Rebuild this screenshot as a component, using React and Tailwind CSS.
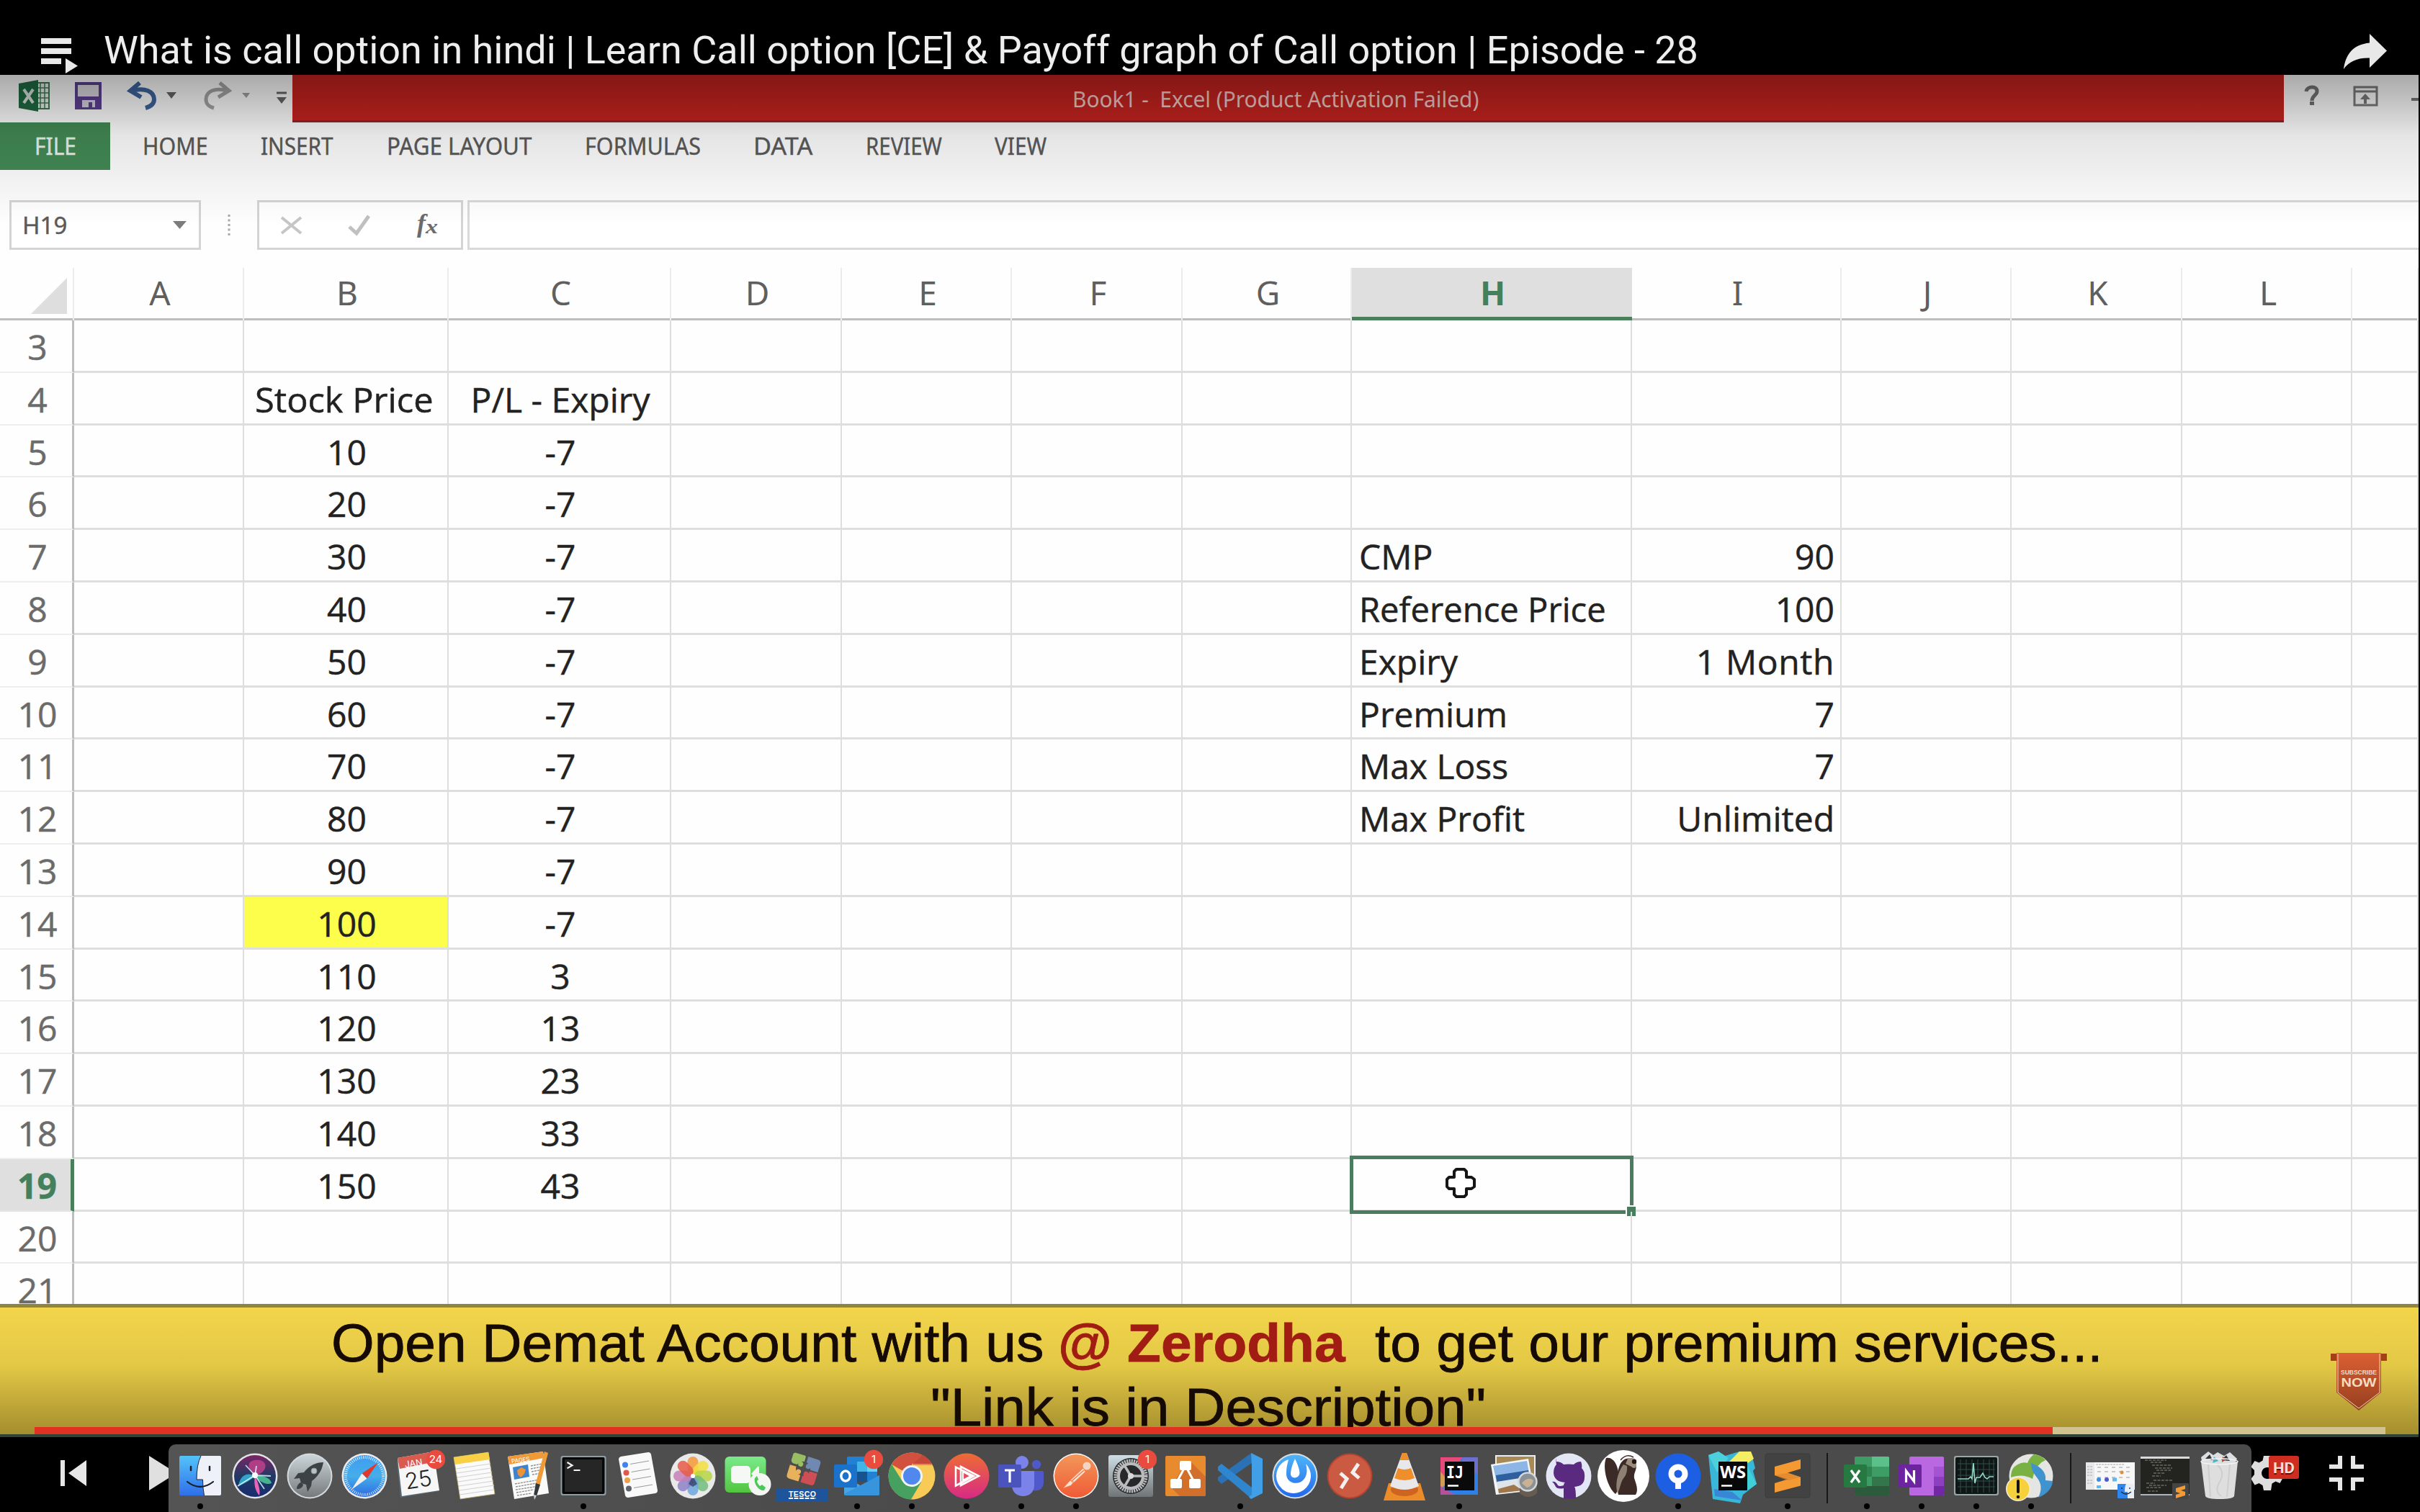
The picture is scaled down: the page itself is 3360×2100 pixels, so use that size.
import React, { useLayoutEffect, useRef, useState } from "react";

/* Text squeezed or stretched horizontally to an exact width */
function Fit({ w, className = "", children }) {
  const ref = useRef(null);
  const [s, setS] = useState(1);
  useLayoutEffect(() => {
    setS(w / ref.current.offsetWidth);
  }, [w]);
  return (
    <span className="block shrink-0 whitespace-pre" style={{ width: w }}>
      <span ref={ref} className={"inline-block origin-left " + className} style={{ transform: `scaleX(${s})` }}>
        {children}
      </span>
    </span>
  );
}

const LETTERS = ["A", "B", "C", "D", "E", "F", "G", "H", "I", "J", "K", "L", ""];
const GRID = "grid grid-cols-[103px_236px_284px_309px_237px_236px_237px_235px_389px_291px_236px_237px_236px_92px]";

const B = { 4: "Stock Price" };
const C = { 4: "P/L - Expiry" };
for (let r = 5; r <= 19; r++) {
  B[r] = String((r - 4) * 10);
  C[r] = r <= 14 ? "-7" : String((r - 15) * 10 + 3);
}
const H = { 7: "CMP", 8: "Reference Price", 9: "Expiry", 10: "Premium", 11: "Max Loss", 12: "Max Profit" };
const I = { 7: "90", 8: "100", 9: "1 Month", 10: "7", 11: "7", 12: "Unlimited" };
const ROWS = Array.from({ length: 19 }, (_, i) => i + 3);

function Cell({ r, c }) {
  const base = "h-[72.8px] border-r-2 border-b-[3px] border-[#dedede] pt-[4px] leading-[66px] whitespace-nowrap ";
  if (c === "B")
    return (
      <div className={base + "pl-[3px] text-center " + (r === 14 ? "bg-[#fdfd4c]" : "")}>
        {r === 4 ? (
          <div className="pl-[10px]">
            <Fit w={248}>{B[r]}</Fit>
          </div>
        ) : (
          B[r]
        )}
      </div>
    );
  if (c === "C") return <div className={base + "pl-[3px] text-center"}>{C[r]}</div>;
  if (c === "H")
    return (
      <div className={base + "relative pl-[10px]"}>
        {r === 8 ? <Fit w={343}>{H[r]}</Fit> : H[r]}
        {r === 19 && (
          <div className="absolute -left-[3px] -top-[5px] h-[81px] w-[394px] border-[5px] border-[#4a7c60]">
            <div className="absolute -bottom-[8px] -right-[8px] h-[15px] w-[14px] border-l-2 border-t-2 border-white bg-[#4a7c60]" />
            <svg className="absolute left-[128px] top-[12px] h-[42px] w-[42px]" viewBox="0 0 42 42">
              <path d="M15 2h11l3 3v8h7l4 3v10l-4 3h-7v8l-3 3H15l-3-3v-8H5l-3-3V16l3-3h7V5z" fill="#fff" stroke="#161616" strokeWidth="4" strokeLinejoin="round" />
            </svg>
          </div>
        )}
      </div>
    );
  if (c === "I")
    return (
      <div className={base + "pr-[8px] text-right"}>
        <span className={r === 9 ? "tracking-[0.6px]" : ""}>{I[r]}</span>
      </div>
    );
  return <div className={base} />;
}

function QuickAccess() {
  return (
    <svg className="h-[65px] w-[406px] shrink-0" viewBox="0 0 406 65">
      <rect x="50" y="11" width="18" height="36" fill="#e8efe9" stroke="#3c7a55" strokeWidth="2" />
      <path d="M56 11v36M62 11v36M50 18h18M50 25h18M50 32h18M50 39h18" stroke="#3c7a55" strokeWidth="1.5" />
      <path d="M26 12L53 7v44l-27-5z" fill="#1f6b43" />
      <path d="M33 20l13 19M46 20L33 39" stroke="#d5e3da" strokeWidth="4" />
      <path d="M106 12h33v34h-33z" fill="#dcdae0" stroke="#5d4192" strokeWidth="4" />
      <path d="M106 30h33v16h-33z" fill="#5d4192" />
      <path d="M114 35h18v10h-4v-7h-5v7h-9z" fill="#d8d4e2" />
      <path d="M194 11l-13 11 15 9M183 22c18-5 31 1 31 12 0 7-5 10-12 12" fill="none" stroke="#3e659f" strokeWidth="6" />
      <path d="M231 24h14l-7 9z" fill="#666" />
      <path d="M305 11l13 11-15 9M316 22c-18-5-30 1-30 12 0 7 4 10 11 12" fill="none" stroke="#a5a5a5" strokeWidth="5" />
      <path d="M336 25h11l-5 7z" fill="#a0a0a0" />
      <path d="M384 25h14" stroke="#666" strokeWidth="3" />
      <path d="M384 31h14l-7 9z" fill="#666" />
    </svg>
  );
}

const TABS = [
  ["HOME", 91, "ml-[45px]"],
  ["INSERT", 101, "ml-[73px]"],
  ["PAGE LAYOUT", 201, "ml-[74px]"],
  ["FORMULAS", 161, "ml-[74px]"],
  ["DATA", 82, "ml-[73px]"],
  ["REVIEW", 106, "ml-[74px]"],
  ["VIEW", 72, "ml-[73px]"],
];

function Badge({ cx, t }) {
  return (
    <g>
      <circle cx={cx} cy="21" r="13.2" fill="#e94b3f" />
      <text x={cx} y="26" fontSize="15" fill="#fff" textAnchor="middle" fontFamily="Inter, sans-serif">{t}</text>
    </g>
  );
}

const petals = ["#f39a3a", "#f3df3d", "#b7d548", "#72bd7e", "#6fa6dd", "#8d83c8", "#c67fb8", "#e75a48"];

const ICONS = {
  finder: (
    <>
      <rect x="9" y="16" width="58" height="55" rx="2" fill="url(#gFinder)" />
      <path d="M39 16h26q2 0 2 2v51q0 2-2 2H43.500q-2-10-2-22H33q0-22 6-33z" fill="#eef2f8" />
      <path d="M39 16q-6 12-6 33h8.500q0 12 2 22" fill="none" stroke="#223" strokeWidth="1" />
      <path d="M25 31v5M51 31v5" stroke="#17202c" strokeWidth="2.500" strokeLinecap="round" />
      <path d="M20 52q18 14 36 0" fill="none" stroke="#17202c" strokeWidth="2.200" strokeLinecap="round" />
    </>
  ),
  siri: (
    <>
      <circle cx="38" cy="44" r="31.500" fill="#e4e3e8" />
      <circle cx="38" cy="44" r="29" fill="url(#gSiri)" />
      <path d="M38 44C24 30 28 20 45 22 56 25 56 38 38 44z" fill="#c8418f" opacity=".8" />
      <path d="M38 44C22 36 16 50 15 58 24 54 32 50 38 44z" fill="#36b6d8" opacity=".85" />
      <path d="M38 44c12-2 22 4 23 10-8 3-17-2-23-10z" fill="#4fd39b" opacity=".8" />
      <path d="M38 44c4 8 8 20 6 27-6-6-8-18-6-27z" fill="#ee62b4" />
      <path d="M14 58L38 43l22 1M25 29l13 14 13 19M40 30l-2 14" stroke="#dffcff" strokeWidth="1.800" fill="none" opacity=".8" />
      <circle cx="38" cy="43" r="4" fill="#fff" />
    </>
  ),
  launchpad: (
    <>
      <circle cx="38" cy="44" r="31.500" fill="#d3dade" />
      <circle cx="38" cy="44" r="29.500" fill="url(#gGray)" />
      <path d="M57 25C45 25 36 31 30 39l-8 1-6 8 8-1 2 7 7 2 2 10 5-8 1-7c8-6 14-14 16-26z" fill="#3d4247" />
      <circle cx="44" cy="37" r="4" fill="#b9c1c5" stroke="#8a9297" />
      <path d="M26 53c-4 1-6 5-6 9 5 0 8-2 9-6z" fill="#3d4247" />
    </>
  ),
  safari: (
    <>
      <circle cx="38" cy="44" r="31.500" fill="#ececec" />
      <circle cx="38" cy="44" r="29" fill="url(#gSafari)" />
      <circle cx="38" cy="44" r="26" fill="none" stroke="#e7f5ff" strokeWidth="4" strokeDasharray=".9 1.820" />
      <path d="M57 25L41.500 47.500 34.500 40.500z" fill="#e2382c" />
      <path d="M20 63L34.500 40.500 41.500 47.500z" fill="#eef0f2" />
    </>
  ),
  calendar: (
    <>
      <path d="M7 24l5 50 54-9-3-10z" fill="#596775" />
      <path d="M8 19l50-9 8 54-52 8z" fill="#f6f6f6" />
      <path d="M8 19l50-9 3 14-50 10z" fill="#d95a4f" />
      <g transform="rotate(-9 36 44)">
        <text x="33" y="30" fontSize="12.500" fill="#fff" textAnchor="middle" fontFamily="Inter, sans-serif">JAN</text>
        <text x="36" y="60" fontSize="31" fill="#222" textAnchor="middle" fontFamily="Inter, sans-serif" fontWeight="300">25</text>
      </g>
      <Badge cx="61" t="24" />
    </>
  ),
  notes: (
    <>
      <path d="M10 18l48-7 9 58-48 7z" fill="#fafafa" stroke="#b5a468" strokeWidth=".8" />
      <path d="M10 18l48-7 2 10-48 7z" fill="#f9cf45" />
      <path d="M13 34l48-7M14 40l48-7M15 46l48-7M16 52l48-7M17 58l48-7M18 64l48-7M18 70l48-7" stroke="#cfd0d2" strokeWidth="1" />
    </>
  ),
  pages: (
    <>
      <path d="M9 17l49-7 8 58-48 8z" fill="#fafafa" />
      <path d="M9 17l49-7 1 9-48 9z" fill="#f09a37" />
      <g transform="rotate(-8 24 22)">
        <text x="14" y="25" fontSize="8" fill="#fff" fontFamily="Inter, sans-serif">PAGES</text>
      </g>
      <path d="M16 32l21-4 2 17-21 4z" fill="#3e83cf" />
      <path d="M22 36l6-4 6 3-2 6-5 5-4-4z" fill="#ee9333" />
      <path d="M41 30l16-3M41 34l16-3M42 38l16-3M43 42l14-2M19 55l34-6M20 59l34-6M20 63l33-5M21 67l24-4M22 71l20-3" stroke="#8c8c8c" strokeWidth="1.300" strokeDasharray="3 1" />
      <path d="M60 10l5 2-12 47-6-2z" fill="#ef9c37" />
      <path d="M48 54l6 2-5 16-4-1z" fill="#33383d" />
      <path d="M45 70l4 1-3 6z" fill="#cfd6d9" />
    </>
  ),
  terminal: (
    <>
      <rect x="6.500" y="16" width="63" height="55" rx="3" fill="#8b9da5" />
      <rect x="8.500" y="18" width="59" height="51" rx="2" fill="#060606" />
      <rect x="12" y="21" width="52" height="45" fill="#262626" />
      <path d="M15.500 25l7 4.200-7 4.200" stroke="#f3f3f3" strokeWidth="2.200" fill="none" />
      <path d="M24.500 36h9" stroke="#f3f3f3" strokeWidth="2" />
    </>
  ),
  reminders: (
    <>
      <path d="M14 17l38-6q3 0 4 3l9 50q0 3-3 4l-38 6q-3 0-4-3L11 21q0-3 3-4z" fill="#f9f9f9" />
      {[["#3f82f2", 20, 28.500], ["#e2574c", 21.500, 39.500], ["#e8a24a", 23, 50], ["#5d646b", 25, 61.500]].map(([f, x, y]) => (
        <g key={f}>
          <circle cx={x} cy={y} r="4" fill={f} />
          <path d={`M${x + 7} ${y - 1}l26-4.500`} stroke="#8d8d8d" strokeWidth=".9" />
        </g>
      ))}
    </>
  ),
  photos: (
    <>
      <circle cx="38" cy="44" r="31.500" fill="#e9e9ea" />
      {petals.map((f, i) => (
        <rect key={f} x="30.500" y="17" width="15" height="25" rx="7.500" fill={f} opacity=".85" transform={`rotate(${i * 45} 38 44)`} />
      ))}
      <path d="M38 44L32 55l6 4 6-4z" fill="#28345c" opacity=".7" />
      <circle cx="38" cy="44" r="3" fill="#fff" />
    </>
  ),
  facetime: (
    <>
      <rect x="6.500" y="17" width="57" height="50" rx="6" fill="url(#gGreen)" />
      <rect x="15" y="30" width="27" height="24" rx="5" fill="#f5f8f4" />
      <path d="M43 41l9-10q2-1 2 1v20z" fill="#f5f8f4" />
      <circle cx="55" cy="55.500" r="15.500" fill="#f4f6f4" />
      <path d="M48 47c-2 8 6 18 13 17l2-4-5-4-3 2c-2-2-4-5-4-7l2-2-2-5z" fill="#4bc957" />
    </>
  ),
  tesco: (
    <>
      <g transform="rotate(17 40 34)">
        <path d="M22 16h14q2 0 2 2v9l-5 4h-9q-4-1-4-4v-9z" fill="#99bd63" />
        <path d="M41 16h14q5 0 5 5v12H49l-8-7z" fill="#7188b3" />
        <path d="M20 34h10l8 5v14H25q-5 0-5-5z" fill="#e8b25d" />
        <path d="M49 35h11v14q0 4-4 4H41v-9z" fill="#cd4f55" />
        <circle cx="39" cy="34" r="10" fill="#4d4d4d" />
        <circle cx="34" cy="29" r="3.500" fill="#99bd63" />
        <circle cx="45" cy="29" r="3.500" fill="#7188b3" />
        <circle cx="34" cy="40" r="3.500" fill="#e8b25d" />
        <circle cx="45" cy="40" r="3.500" fill="#cd4f55" />
      </g>
      <rect x="2" y="61" width="72" height="19" fill="#1d549c" />
      <text x="38" y="72.500" fontSize="10.500" fontWeight="700" fill="#fff" textAnchor="middle" fontFamily="Liberation Sans, sans-serif" textLength="38">TESCO</text>
      <path d="M19 75h38" stroke="#fff" strokeWidth="2.200" strokeDasharray="6 1.500" />
    </>
  ),
  outlook: (
    <>
      <rect x="24" y="17" width="42" height="34" rx="2" fill="#2381d4" />
      <path d="M38 24h14v14H38z" fill="#41b5ea" />
      <path d="M52 24h14v14H52z" fill="#62d5f5" />
      <path d="M38 38h14v14H38z" fill="#17548f" />
      <path d="M20 44l24 14 25-15v26q0 2-2 2H22q-2 0-2-2z" fill="#4aa5e6" />
      <path d="M20 69l49-26v26q0 2-2 2H22z" fill="#3795dd" />
      <rect x="6" y="28" width="32" height="32" rx="2" fill="#1b72ca" />
      <ellipse cx="22" cy="44" rx="6.200" ry="7" fill="none" stroke="#fff" strokeWidth="3.500" />
      <Badge cx="61" t="1" />
    </>
  ),
  chrome: (
    <>
      <circle cx="38" cy="44" r="32.500" fill="#f7cb55" />
      <path d="M38 44L10 28a32.500 32.500 0 0 1 56-1H38z" fill="#d2503f" />
      <path d="M38 29h28.500q-5-10-13-15z" fill="#b43d30" opacity=".4" />
      <path d="M10 27.500A32.500 32.500 0 0 0 37 76.500l14-24L38 44 24 50z" fill="#46a05f" />
      <circle cx="38" cy="44" r="15" fill="#f2f3f4" />
      <circle cx="38" cy="44" r="12" fill="#5188ee" />
    </>
  ),
  pluralsight: (
    <>
      <circle cx="38" cy="44" r="31.500" fill="url(#gPlural)" />
      <path d="M30 31l25 13-25 13zM23 31.500v26L48 44z" fill="none" stroke="#fff" strokeWidth="2.600" />
      <path d="M33 38l11 6-11 6z" fill="none" stroke="#fff" strokeWidth="2.200" />
    </>
  ),
  teams: (
    <>
      <circle cx="59" cy="28" r="6.200" fill="#5059c9" />
      <path d="M48 37h19q2 0 2 2v14c0 14-18 14-21 6z" fill="#5059c9" />
      <circle cx="39" cy="25" r="9" fill="#7b83eb" />
      <path d="M25 37h31v20c0 20-31 20-31 0z" fill="#7b83eb" />
      <rect x="6" y="28" width="32" height="32" rx="2" fill="#4b53bc" />
      <path d="M15 36h14M22 36v17" stroke="#fff" strokeWidth="3.200" />
    </>
  ),
  postman: (
    <>
      <circle cx="38" cy="44" r="31.500" fill="#fff" />
      <circle cx="38" cy="44" r="30" fill="url(#gPost)" />
      <circle cx="53" cy="30" r="5.500" fill="#f6d4c2" />
      <path d="M48 33L30 50l4 4L51 38zM30 50L20 61l11-4 4-5z" fill="#fbe4d8" stroke="#f3804f" strokeWidth=".8" />
      <path d="M32 51l17-15" stroke="#f07c47" strokeWidth="1.500" />
    </>
  ),
  settings: (
    <>
      <rect x="7" y="15" width="62" height="58" rx="3" fill="url(#gSet)" />
      <circle cx="38" cy="44" r="25" fill="#26282a" />
      <circle cx="38" cy="44" r="21" fill="none" stroke="#b9bbbc" strokeWidth="5" strokeDasharray="2.200 1.100" />
      <circle cx="38" cy="44" r="17" fill="none" stroke="#b9bbbc" strokeWidth="4" />
      <path d="M38 44h18M38 44l-9-15M38 44l-9 15" stroke="#b9bbbc" strokeWidth="3.500" />
      <circle cx="38" cy="44" r="4" fill="#d9d9d9" />
      <Badge cx="61" t="1" />
    </>
  ),
  drawio: (
    <>
      <rect x="10" y="16" width="56" height="56" rx="2" fill="#e88a2e" />
      <path d="M45 24l21 21v25q0 2-2 2H30L18 60l14-24z" fill="#d2702b" />
      <path d="M38 30L25 54M38 30l13 24" stroke="#fff" strokeWidth="3" />
      <rect x="30" y="23" width="16" height="13" rx="2" fill="#fff" />
      <rect x="17" y="48" width="16" height="13" rx="2" fill="#fff" />
      <rect x="43" y="48" width="16" height="13" rx="2" fill="#fff" />
    </>
  ),
  vscode: (
    <>
      <path d="M52 13L18 49l-6 5-5-5v-3L52 13z" fill="#2a72b5" />
      <path d="M7 50l5 5 42-29V12L7 46z" fill="#2a72b5" />
      <path d="M7 31l5-4 42 33v16L7 36z" fill="#2f86cf" />
      <path d="M53 12l16 8v48l-16 8-3-3 4-3V30z" fill="#419fe8" />
    </>
  ),
  mattermost: (
    <>
      <circle cx="38" cy="44" r="31.500" fill="#dcdfe2" />
      <circle cx="38" cy="44" r="29.500" fill="url(#gMatt)" />
      <path d="M29 21A24 24 0 1 0 53 27q4 14-3 22c-8 9-24 5-24-8 0-8 1-12 3-20z" fill="#fff" />
      <path d="M38 20q8 17 6 22c-2 6-12 6-12-1q0-8 6-21z" fill="#fff" />
    </>
  ),
  rdp: (
    <>
      <circle cx="38" cy="44" r="31.500" fill="#b5432f" />
      <circle cx="38" cy="44" r="29.500" fill="#cb5a43" />
      <path d="M25 40l9 8-8 13" fill="none" stroke="#f5f0ee" strokeWidth="5" strokeLinejoin="miter" />
      <path d="M50 27l-8 12 9 8" fill="none" stroke="#f5f0ee" strokeWidth="5" strokeLinejoin="miter" />
    </>
  ),
  vlc: (
    <>
      <path d="M16 54h44l7 24H9z" fill="#ec8b2a" />
      <ellipse cx="38" cy="63" rx="19" ry="9" fill="#cf6420" />
      <path d="M35 12h6l17 46q-20 10-40 0z" fill="#e8e8ea" />
      <path d="M35 12h6l3.500 10h-13zM29 33q9 4 18 0l5 14q-14 6-28 0z" fill="#ee8f2c" />
    </>
  ),
  intellij: (
    <>
      <rect x="12" y="18" width="52" height="52" fill="#2f7fe8" />
      <path d="M12 18h30L28 44 12 52z" fill="#e9487a" />
      <path d="M42 18h22v24L42 30z" fill="#6a6fd0" />
      <path d="M12 38l12 14-12 10z" fill="#d39a52" />
      <path d="M12 58l20 12H12z" fill="#b2529c" />
      <rect x="18" y="24" width="41" height="40" fill="#0a0a0a" />
      <text x="20" y="47" fontSize="23" fontWeight="700" fill="#fff" fontFamily="DejaVu Sans Mono, monospace" textLength="24" lengthAdjust="spacingAndGlyphs">IJ</text>
      <path d="M22 57.500h15" stroke="#fff" strokeWidth="2.500" />
    </>
  ),
  preview: (
    <>
      <rect x="13" y="16" width="54" height="38" fill="#a88a55" stroke="#eee" strokeWidth="2" />
      <path d="M6 28l52-8 8 44-53 6z" fill="#f3f5f7" />
      <path d="M9 30l47-7 3 17-46 8z" fill="#8db5e6" />
      <path d="M13 43l45-7 2 10-46 8z" fill="#2f5f9f" />
      <path d="M14 52l45-7 3 15-46 7z" fill="#dfe4e8" />
      <path d="M16 62l22-6 12 8-33 4z" fill="#a0774c" />
      <path d="M46 54h24v14q-12 10-24 0z" fill="#665c50" />
      <circle cx="57" cy="52" r="12.500" fill="#8a9298" stroke="#d4d8da" strokeWidth="2.500" />
      <path d="M49 54q8-10 16-4-2 9-9 10z" fill="#c9b294" />
    </>
  ),
  github: (
    <>
      <circle cx="38" cy="44" r="31.500" fill="#e3e6f4" />
      <path d="M21 24q6 0 10 4 7-1 14 0 4-4 10-4 2 5 1 9 5 5 4 13 0 12-14 13 2 2 2 16-9 2-17 0V61q-10 2-12-4-2-4-4-5 5-1 8 5 2 2 8 0 0-3 2-4-15-1-16-13 0-8 4-12-1-4 0-9z" fill="#5a2a80" />
    </>
  ),
  dbeaver: (
    <>
      <circle cx="38" cy="44" r="36" fill="#fff" />
      <path d="M14 19c8-2 15 6 17 20s0 26-4 30C17 62 8 34 14 19z" fill="#3b2a25" />
      <path d="M36 24c6-8 20-5 20 5 0 8-4 11-3 18 3 9 6 16 2 23H31c-2-10-4-36 5-46z" fill="#3b2a25" />
      <path d="M38 28c-9 12-12 30-8 40 4-8 4-16 9-22s4-14 4-16z" fill="#8e8072" />
      <path d="M44 20q8-3 12 2v9q-3 4-7 0l-8-4z" fill="#9b8c7c" />
      <circle cx="53" cy="24" r="3.200" fill="#231815" />
      <path d="M34 22q8-10 18-4" fill="none" stroke="#3b2a25" strokeWidth="1.500" />
    </>
  ),
  sourcetree: (
    <>
      <circle cx="38" cy="44" r="31.500" fill="#1d5fe3" />
      <path d="M41 46l10-10q-2 14-10 16z" fill="#8fb1f5" />
      <circle cx="38" cy="41" r="9.500" fill="none" stroke="#fff" strokeWidth="8" />
      <path d="M34 48h8v14h-8z" fill="#fff" />
    </>
  ),
  webstorm: (
    <>
      <path d="M4 15l14-5 9 6 20-6h16l6 23-3 4 5 18-19 15-4 12-38-6z" fill="#38b7d8" />
      <path d="M4 15l14-5 14 9-16 20z" fill="#4bd0dc" />
      <path d="M33 24l14-14h16l4 10-14 10z" fill="#f5ee62" />
      <path d="M57 28l14 27-14 10z" fill="#3fd0d8" />
      <path d="M12 62l25 4 14 12-38-6z" fill="#3a86d6" />
      <rect x="18" y="24" width="40" height="40" fill="#080808" />
      <text x="20" y="47" fontSize="23" fontWeight="700" fill="#fff" fontFamily="Open Sans, sans-serif" textLength="36" lengthAdjust="spacingAndGlyphs">WS</text>
      <path d="M22 57.500h15" stroke="#fff" strokeWidth="2.500" />
    </>
  ),
  sublime: (
    <>
      <rect x="7" y="13" width="62" height="61" rx="3" fill="#424242" stroke="#3b3b3b" />
      <path d="M20 31l36-10v13L38 39.500l18 6v12L20 67V54l18-5.500L20 43z" fill="#f59a33" />
      <path d="M38 39.500l18 6-18 5L20 43z" fill="#d9832b" opacity=".6" />
    </>
  ),
  excel: (
    <>
      <rect x="21" y="17" width="48" height="54" rx="2" fill="#3d9d64" />
      <path d="M45 17h22q2 0 2 2v12H45z" fill="#5cc08a" />
      <path d="M21 31h24v14H21z" fill="#2f8450" />
      <path d="M45 45h24v13H45z" fill="#33764b" />
      <path d="M21 58h48v11q0 2-2 2H23q-2 0-2-2z" fill="#2c5b3c" />
      <rect x="6" y="28" width="32" height="32" rx="2" fill="#267a41" />
      <path d="M16 36l12 17M28 36L16 53" stroke="#fff" strokeWidth="3.400" />
    </>
  ),
  onenote: (
    <>
      <rect x="21" y="17" width="48" height="54" rx="2" fill="#b968e2" />
      <path d="M55 31h14v14H55z" fill="#a454d2" />
      <path d="M55 45h14v13H55z" fill="#8c40c0" />
      <path d="M55 58h14v11q0 2-2 2H55z" fill="#7228a5" />
      <rect x="6" y="28" width="32" height="32" rx="2" fill="#6c24a0" />
      <path d="M16.500 53V37l11 14.500V36" fill="none" stroke="#fff" strokeWidth="3.200" />
    </>
  ),
  activity: (
    <>
      <rect x="7" y="16" width="62" height="55" rx="3" fill="#9aa5a6" />
      <rect x="9" y="18" width="58" height="51" rx="2" fill="#101615" />
      <path d="M16 21v46M24 21v46M32 21v46M40 21v46M48 21v46M56 21v46M62 21v46M12 27h52M12 35h52M12 43h52M12 51h52M12 59h52" stroke="#2d5148" strokeWidth="1" />
      <path d="M12 48h15l3-3 2 3 2-22 2 28 2-8h5l4-6 3 6 3 2 3-3h6" fill="none" stroke="#8fd8c4" strokeWidth="1.600" />
    </>
  ),
  anyconnect: (
    <>
      <circle cx="38" cy="44" r="30.500" fill="#e5e6e4" />
      <path d="M42 14q10 1 16 8-14 6-18 26-14-8-30-2 0-10 5-15 10-8 18-5 3-8 9-12z" fill="#79b243" />
      <path d="M38 26q22 8 20 24l10 1q-1 15-20 23 8-16-2-28-8-9-8-20z" fill="#3f93cf" />
      <circle cx="20" cy="62" r="17" fill="#f0eee2" />
      <circle cx="20" cy="62" r="15.500" fill="#f6d13c" />
      <path d="M20 51v15" stroke="#151515" strokeWidth="4" strokeLinecap="round" />
      <circle cx="20" cy="73" r="2.300" fill="#151515" />
    </>
  ),
  finderWindow: (
    <>
      <rect x="4" y="25" width="68" height="38" fill="#f7f7f7" />
      <rect x="4" y="25" width="12" height="38" fill="#e8e8ea" />
      <path d="M6 31h7M6 35h7M6 39h7M6 43h7M6 50h7M6 54h7M18 28h40" stroke="#aaa" strokeDasharray="3 1" />
      <path d="M20 32h46M20 38h46M20 46h46" stroke="#c8c8c8" strokeWidth="2" strokeDasharray="5 5" />
      <circle cx="22" cy="49" r="3" fill="#3c8fe0" />
      <circle cx="33" cy="49" r="3" fill="#5059c9" />
      <rect x="41" y="46.500" width="6" height="5" fill="#5fb9f0" />
      <rect x="19" y="57" width="6" height="4" fill="#5fb9f0" />
      <circle cx="54" cy="39" r="2.500" fill="#d9923d" />
      <rect x="48" y="55" width="23" height="20" rx="1" fill="#2d87ee" />
      <path d="M60 55h11v20h-9v-9h-4q0-8 2-11z" fill="#e9eff6" />
      <path d="M53 66q7 6 14 0M54 60v2M65 60v2" fill="none" stroke="#1a2430" strokeWidth="1.300" />
    </>
  ),
  sublimeWindow: (
    <>
      <rect x="4" y="17" width="68" height="53" fill="#23241f" />
      <rect x="4" y="17" width="68" height="3" fill="#d9dadb" />
      <rect x="4" y="69" width="68" height="2" fill="#aeb3c0" />
      <path d="M10 22h30M18 25h15M20 29h26M24 33h24M26 36h20M22 40h15M20 44h12M22 50h26M12 54h12M16 57h24M12 60h20M14 65h14" stroke="#8a8b82" strokeWidth="1.200" strokeDasharray="4 1.500" />
      <rect x="48" y="54" width="23" height="22" rx="1" fill="#454545" />
      <path d="M53 61l13-4v5l-6 2 6 2v5l-13 4v-5l6-2-6-2z" fill="#f59a33" />
    </>
  ),
  trash: (
    <>
      <path d="M12 18l10-8 7 5 6-4 9 5 8-5 10 9-4 8H14z" fill="#dcdedf" />
      <path d="M18 20l6-6 4 8zM40 22l7-7 5 8z" fill="#33383c" />
      <path d="M30 17l6 6-8 3z" fill="#4cb6c6" />
      <path d="M42 17l5 4-6 4z" fill="#b3492f" />
      <path d="M12 24q26 4 51 0l-5 48q-2 4-20 4t-20-4z" fill="#dededf" />
      <path d="M22 27l3 46M52 27l-4 46M34 28q12 10 4 24t2 20" stroke="#cdced0" strokeWidth="2" fill="none" />
      <ellipse cx="37.500" cy="24" rx="25.500" ry="4" fill="none" stroke="#f3f3f3" strokeWidth="1.500" />
    </>
  ),
};

const DOTS = new Set(["finder", "terminal", "outlook", "chrome", "pluralsight", "teams", "postman", "vscode", "intellij", "sourcetree", "sublime", "excel", "onenote", "activity", "anyconnect"]);
const DOCK = [
  ["finder", "siri", "launchpad", "safari", "calendar", "notes", "pages", "terminal", "reminders", "photos", "facetime", "tesco", "outlook", "chrome", "pluralsight", "teams", "postman", "settings", "drawio", "vscode", "mattermost", "rdp", "vlc", "intellij", "preview", "github", "dbeaver", "sourcetree", "webstorm", "sublime"],
  ["excel", "onenote", "activity", "anyconnect"],
  ["finderWindow", "sublimeWindow", "trash"],
];

function Grad({ id, a, b, m }) {
  return (
    <linearGradient id={id} x1="0" y1="0" x2="0" y2="1">
      <stop offset="0" stopColor={a} />
      {m && <stop offset=".5" stopColor={m} />}
      <stop offset="1" stopColor={b} />
    </linearGradient>
  );
}

function Dock() {
  return (
    <div className="flex h-[94px] w-[2892px] shrink-0 rounded-t-[10px] bg-[#4b4b4b] bg-linear-to-r from-[#545454] via-[#4b4b4b] via-35% to-[#4b4b4b] px-[6px]">
      <svg className="absolute h-0 w-0">
        <defs>
          <Grad id="gFinder" a="#54c3fa" b="#2f6fe9" />
          <Grad id="gSiri" a="#7c2465" m="#213a63" b="#182c72" />
          <Grad id="gGray" a="#cbd5d9" b="#777a7c" />
          <Grad id="gSafari" a="#3f9cf0" m="#45aeea" b="#2d6be0" />
          <Grad id="gGreen" a="#7bea8a" b="#52c540" />
          <Grad id="gPlural" a="#ee6c33" b="#d72a86" />
          <Grad id="gPost" a="#f2975a" b="#ef5b35" />
          <Grad id="gSet" a="#cfdfe6" b="#707475" />
          <Grad id="gMatt" a="#4db5f8" b="#2468ea" />
        </defs>
      </svg>
      {DOCK.map((group, g) => (
        <React.Fragment key={g}>
          {g > 0 && (
            <div className="flex w-[34px] justify-center pt-[12px]">
              <div className="h-[70px] w-[2px] bg-[#181818]" />
            </div>
          )}
          {group.map((n) => (
            <svg key={n} className="h-[94px] w-[76px] shrink-0 overflow-visible" viewBox="0 0 76 94">
              {ICONS[n]}
              {DOTS.has(n) && <circle cx="38" cy="86" r="4" fill="#000" />}
            </svg>
          ))}
        </React.Fragment>
      ))}
    </div>
  );
}

export default function App() {
  return (
    <div className="flex h-[2100px] w-[3360px] flex-col overflow-hidden bg-black font-['Open_Sans',sans-serif]">
      <div className="relative z-10 flex h-[104px] shrink-0 items-center pt-[35px]">
        <svg className="ml-[57px] h-[54px] w-[54px] shrink-0 translate-y-[8px]" viewBox="0 0 54 54">
          <path d="M0 2h42v8H0zM0 16h42v8H0zM0 30h28v8H0zM34 30l17 10.500L34 51z" fill="#e8e8e8" />
        </svg>
        <div className="ml-[33px]">
          <Fit w={2214} className="font-[Roboto,sans-serif] text-[54px] text-[#eeeeee]">
            What is call option in hindi | Learn Call option [CE] &amp; Payoff graph of Call option | Episode - 28
          </Fit>
        </div>
        <svg className="ml-[895px] h-[50px] w-[62px] shrink-0 translate-y-[2px]" viewBox="0 0 62 50">
          <path d="M37 0l24 23.500L37 47V33.500C19 33 8 39 1 49 4 28 14 15 37 12.500z" fill="#e8e8e8" />
        </svg>
      </div>

      <div className="relative flex h-[1892px] w-[3358px] shrink-0 flex-col overflow-hidden bg-[#fefefe]">
        <div className="flex h-[66px] shrink-0 bg-[#fdfdfd]">
          <QuickAccess />
          <div className="flex h-[66px] w-[2765px] shrink-0 items-center border-b-[3px] border-[#8e2430] bg-[#c6231f] pl-[1083px] pt-[3px]">
            <Fit w={564} className="font-['Noto_Sans',sans-serif] text-[31px] text-[#f3c9c5]">{"Book1 -  Excel (Product Activation Failed)"}</Fit>
          </div>
          <svg className="h-[65px] w-[187px] shrink-0" viewBox="0 0 187 65">
            <path d="M31 23c1-8 16-8 15 0 0 5-7 6-7 13" fill="none" stroke="#757575" strokeWidth="5" />
            <path d="M36 37h6v5h-6z" fill="#757575" />
            <path d="M98 17h31v25H98zM98 23h31" fill="none" stroke="#7b7b7b" strokeWidth="3" />
            <path d="M113 26l7 8h-5v6h-4v-6h-5z" fill="#7b7b7b" />
            <path d="M177 34h10" stroke="#757575" strokeWidth="4" />
          </svg>
        </div>
        <div className="flex h-[66px] shrink-0 items-center font-['Noto_Sans',sans-serif] text-[33px] leading-[65px] text-[#5a5a5a] [-webkit-text-stroke:0.4px_currentColor]">
          <div className="flex h-[66px] w-[153px] shrink-0 bg-[#438a55] pl-[48px] text-[#e9f3ea]">
            <Fit w={58}>FILE</Fit>
          </div>
          {TABS.map(([t, w, m]) => (
            <div key={t} className={m + " h-[66px]"}>
              <Fit w={w}>{t}</Fit>
            </div>
          ))}
        </div>

        <div className="mt-[42px] flex h-[69px] shrink-0 pl-[13px]">
          <div className="flex w-[266px] items-center justify-between border-[3px] border-[#d4d4d4] bg-white pl-[15px] pr-[17px] font-['Noto_Sans',sans-serif] text-[32px] text-[#5a5a5a] [-webkit-text-stroke:0.4px_currentColor]">
            <Fit w={62}>H19</Fit>
            <svg className="h-[11px] w-[19px]" viewBox="0 0 19 11"><path d="M0 0h19l-9.500 11z" fill="#7c7c7c" /></svg>
          </div>
          <div className="flex w-[78px] items-center justify-center">
            <svg className="h-[30px] w-[4px]" viewBox="0 0 4 30"><path d="M2 0v30" stroke="#a8a8a8" strokeWidth="3" strokeDasharray="3 3.500" /></svg>
          </div>
          <div className="flex w-[286px] items-center border-[3px] border-[#d4d4d4] bg-white pl-[30px]">
            <svg className="h-[50px] w-[240px] shrink-0" viewBox="0 -5 240 50">
              <path d="M1 9l27 22M28 9L1 31" stroke="#c6c6c6" strokeWidth="4" />
              <path d="M95 22l10 9 17-24" fill="none" stroke="#c0c0c0" strokeWidth="5" />
              <text x="189" y="29" fontSize="36" fontStyle="italic" fontWeight="700" fill="#6b6b6b" fontFamily="Liberation Serif, serif">f</text>
              <text x="201" y="31" fontSize="27" fontStyle="italic" fontWeight="700" fill="#6b6b6b" fontFamily="Liberation Serif, serif" textLength="17" lengthAdjust="spacingAndGlyphs">x</text>
            </svg>
          </div>
          <div className="ml-[6px] flex-1 border-y-[3px] border-l-[3px] border-[#d9d9d9] bg-white" />
        </div>

        <div className={GRID + " mt-[25px] h-[73px] shrink-0 border-b-[3px] border-[#bdbdbd] text-center font-['Noto_Sans',sans-serif] text-[46px] leading-[69px] text-[#5f5f5f]"}>
          <div className="flex justify-end border-r-2 border-[#ececec] pr-[8px] pt-[14px]">
            <svg className="h-[50px] w-[50px]" viewBox="0 0 50 50"><path d="M50 0v50H0z" fill="#dedede" /></svg>
          </div>
          {LETTERS.map((l, i) =>
            l === "H" ? (
              <div key={i} className="h-[73px] border-b-[5px] border-[#4a7f5c] bg-[#dfdfdf] pl-[2px] font-bold text-[#44805c]">{l}</div>
            ) : (
              <div key={i} className="border-r-2 border-[#ebebeb] pl-[4px]">{l}</div>
            )
          )}
        </div>

        <div className="h-[1367px] shrink-0 overflow-hidden text-[48px] text-[#222222] [-webkit-text-stroke:0.5px_currentColor]">
          {ROWS.map((r) => (
            <div key={r} className={GRID + " h-[72.8px]"}>
              <div
                className={
                  r === 19
                    ? "border-r-[5px] border-b-2 border-[#4a7f5c] border-b-[#e4e4e4] bg-[#dfdfdf] pt-[4px] pl-[5px] text-center leading-[66px] font-bold text-[#44805c]"
                    : "border-r-[3px] border-b-2 border-[#bdbdbd] border-b-[#eeeeee] pt-[4px] pl-[4px] text-center leading-[66px] text-[#6b6b6b]"
                }
              >
                {r}
              </div>
              {LETTERS.map((c, i) => (
                <Cell key={i} r={r} c={c} />
              ))}
            </div>
          ))}
        </div>

        <div className="relative -mt-[1px] flex h-[185px] shrink-0 flex-col border-t-[5px] border-[#8f8440] bg-linear-to-b from-[#f3d54b] via-[#e3c846] via-45% to-[#a28b2d] pt-[5px] font-['Liberation_Sans',sans-serif] text-[74px] leading-[89px] text-[#150a04] [-webkit-text-stroke:0.8px_currentColor]">
          <div className="flex h-[89px] pl-[460px]">
            <Fit w={989}>Open Demat Account with us</Fit>
            <div className="ml-[20px]">
              <Fit w={399} className="font-bold text-[#a11d13]">@ Zerodha</Fit>
            </div>
            <div className="ml-[41px]">
              <Fit w={1011}>to get our premium services...</Fit>
            </div>
          </div>
          <div className="pl-[1292px]">
            <Fit w={771}>"Link is in Description"</Fit>
          </div>
          <svg className="absolute left-[3235px] top-[62px] h-[82px] w-[80px] [-webkit-text-stroke:0]" viewBox="0 0 80 82">
            <path d="M1 2h78v10h-8V4H9v8H1z" fill="#a53f18" />
            <path d="M9 1h62v55L40 81 9 56z" fill="url(#gRibbon)" />
            <path d="M11 2v54l29 22 29-22V2" fill="none" stroke="#f0d7b5" strokeWidth="1" />
            <defs><Grad id="gRibbon" a="#dc5f33" b="#953f1f" /></defs>
            <text x="40" y="31" fontSize="9.500" fontWeight="700" fill="#f5ddc0" textAnchor="middle" fontFamily="Liberation Sans, sans-serif" textLength="50" lengthAdjust="spacingAndGlyphs">SUBSCRIBE</text>
            <text x="40" y="48" fontSize="17" fontWeight="700" fill="#f5ddc0" textAnchor="middle" fontFamily="Liberation Sans, sans-serif" textLength="49" lengthAdjust="spacingAndGlyphs">NOW</text>
          </svg>
          <div className="absolute bottom-0 left-0 h-[4px] w-full bg-[#2f4233]" />
          <div className="absolute bottom-[4px] left-[48px] flex h-[10px] w-[3264px] bg-[#d0c390]">
            <div className="w-[2802px] bg-[#e03122]" />
          </div>
        </div>

        <div className="pointer-events-none absolute left-0 top-0 h-[210px] w-full bg-linear-to-b from-black/33 via-black/10 via-40% to-transparent" />
      </div>

      <div className="flex h-[104px] shrink-0 pt-[10px]">
        <div className="flex w-[234px] shrink-0">
          <svg className="ml-[84px] mt-[22px] h-[36px] w-[36px]" viewBox="0 0 36 36">
            <path d="M0 0h6v36H0zM36 0v36L11 18z" fill="#e6e6e6" />
          </svg>
          <svg className="ml-[87px] mt-[16px] h-[48px] w-[27px]" viewBox="0 0 27 48">
            <path d="M0 0l27 17v14L0 48z" fill="#e0e0e0" />
          </svg>
        </div>
        <Dock />
        <svg className="mt-[16px] h-[48px] w-[66px] shrink-0" viewBox="0 0 66 48">
          <path
            fillRule="evenodd"
            d="M17 0h10l1.500 6 5 3 6-2.500 5 8.500-5 4v6l5 4-5 9-6-2.500-5 3L27 48H17l-1.500-7-5-3-6 2.500L0 33v-2l4-5v-6l-4-4v-2l4.500-7 6 2.500 5-3zM22 16a8 8 0 1 0 .1 0z"
            fill="#dedede"
          />
          <rect x="24" y="0" width="42" height="32" rx="3" fill="#cf2d20" />
          <text x="45" y="24" fontSize="21" fontWeight="700" fill="#5e100a" textAnchor="middle" fontFamily="Roboto, sans-serif" textLength="30" lengthAdjust="spacingAndGlyphs" dy="2">HD</text>
          <text x="45" y="24" fontSize="21" fontWeight="700" fill="#f1dcda" textAnchor="middle" fontFamily="Roboto, sans-serif" textLength="30" lengthAdjust="spacingAndGlyphs">HD</text>
        </svg>
        <svg className="ml-[42px] mt-[16px] h-[48px] w-[48px] shrink-0" viewBox="0 0 48 48">
          <path d="M12 0h6v18H0v-6h12zM30 0h6v12h12v6H30zM0 30h18v18h-6V36H0zM30 30h18v6H36v12h-6z" fill="#e6e6e6" />
        </svg>
      </div>
    </div>
  );
}
